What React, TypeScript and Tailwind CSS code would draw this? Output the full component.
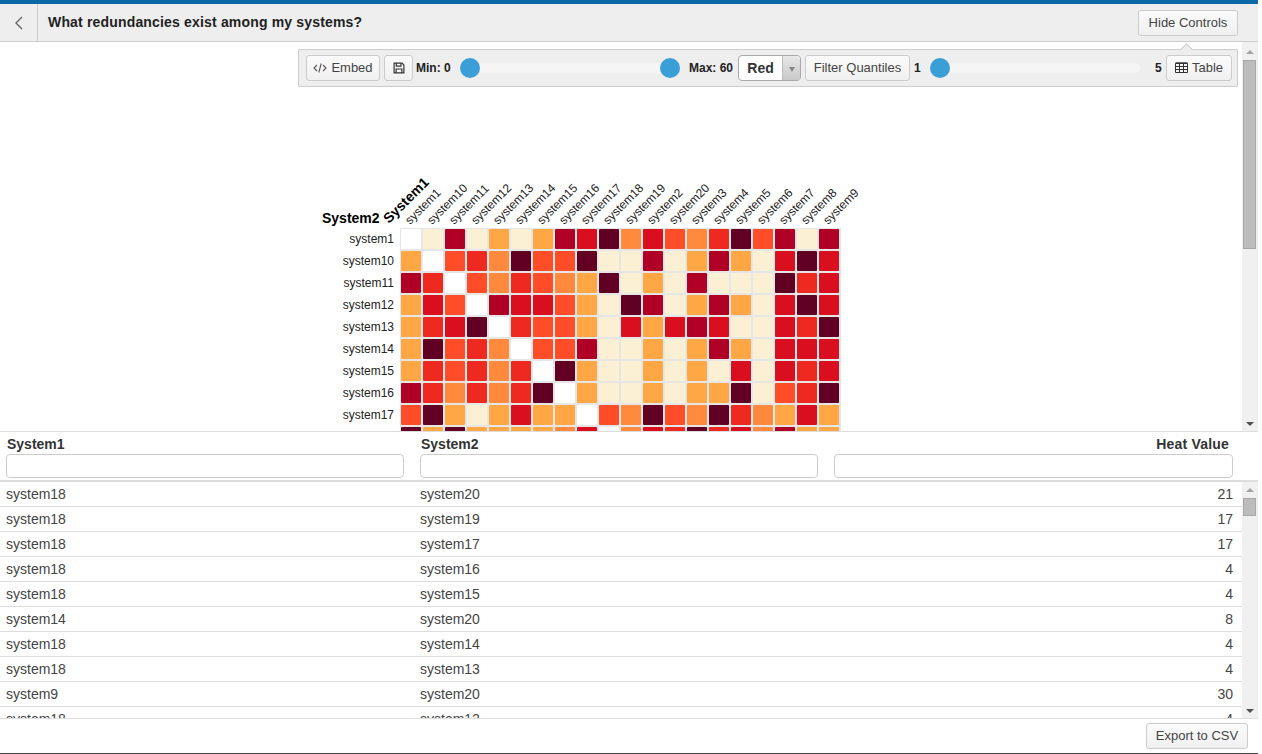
const COLORS: Record<string, string> = {
  w: "#ffffff",
  c: "#fbf0d3",
  o: "#ffa744",
  O: "#ff8a3d",
  r: "#ff4d2a",
  R: "#ee2a20",
  d: "#d90e1f",
  D: "#b10026",
  k: "#620023",
};

const COLUMNS = [1, 10, 11, 12, 13, 14, 15, 16, 17, 18, 19, 2, 20, 3, 4, 5, 6, 7, 8, 9].map((n) => `system${n}`);

const HEAT = [
  "wcDcocoDdkOdrORkrDcD",
  "owrROkrrkccDcoDocdkd",
  "DRwrORrOokcocDccckRd",
  "odrwDddrockDcoDocdkd",
  "oRdkwRrrocdodDdccdRk",
  "okrROwrrDccocoDocddd",
  "oRrRORwkoccococdcdRd",
  "DRORORkwoccocookcrRk",
  "rkocodoowrOkrOkROodo",
  "kokooooOdwOdRkRdODoo",
];

const ROWS = [
  ["system18", "system20", "21"],
  ["system18", "system19", "17"],
  ["system18", "system17", "17"],
  ["system18", "system16", "4"],
  ["system18", "system15", "4"],
  ["system14", "system20", "8"],
  ["system18", "system14", "4"],
  ["system18", "system13", "4"],
  ["system9", "system20", "30"],
  ["system18", "system12", "4"],
];

const buttonClass =
  "flex h-[26px] items-center justify-center rounded-[3px] border border-[#ccc] bg-gradient-to-b from-[#fbfbfb] to-[#f0f0f0] text-[13px] text-[#444]";

function Scrollbar({ topClass, thumbClass }: { topClass: string; thumbClass: string }) {
  return (
    <div className="flex h-full w-[16px] shrink-0 flex-col items-center bg-[#f0f0f0]">
      <div className={`h-0 w-0 border-x-[4px] border-b-[4px] border-x-transparent border-b-[#a3a3a3] ${topClass}`} />
      <div className={`ml-px mt-[6px] w-[13px] self-start border border-[#a8a8a8] bg-[#bcbcbc] ${thumbClass}`} />
      <div className="mb-[5px] mt-auto h-0 w-0 border-x-[4px] border-t-[4px] border-x-transparent border-t-[#505050]" />
    </div>
  );
}

function Slider({ width, second }: { width: string; second?: boolean }) {
  return (
    <div className={`relative flex h-[20px] items-center justify-between ${width}`}>
      <div className="absolute inset-x-0 h-[10px] rounded-[5px] bg-[#f5f5f5]" />
      <div className="relative h-[20px] w-[20px] rounded-full bg-[#3a9fd6]" />
      {second && <div className="relative h-[20px] w-[20px] rounded-full bg-[#3a9fd6]" />}
    </div>
  );
}

function CodeIcon() {
  return (
    <svg width="14" height="12" viewBox="0 0 14 12" fill="none" stroke="#555" strokeWidth="1.1">
      <path d="M4 3 1 6l3 3M10 3l3 3-3 3M8.2 1.5 5.8 10.5" />
    </svg>
  );
}

function SaveIcon() {
  return (
    <svg width="12" height="12" viewBox="0 0 13 13" fill="none" stroke="#333" strokeWidth="1.3">
      <path d="M1.2 1.2h8.6l2 2v8.6H1.2z" />
      <path d="M3.6 1.4v3h5v-3M3.4 11.6V7.6h6.2v4" />
    </svg>
  );
}

function TableIcon() {
  return (
    <svg width="13" height="12" viewBox="0 0 13 12" fill="none" stroke="#333" strokeWidth="1">
      <path d="M.5 1.5h12v9H.5zM.5 4.5h12M.5 7.5h12M4.5 1.5v9M8.5 1.5v9" />
      <path d="M.5 1h12" strokeWidth="1.4" />
    </svg>
  );
}

function Heatmap() {
  return (
    <svg viewBox="310 170 560 261" className="block h-[261px] w-[560px]" fontFamily="'Liberation Sans', Arial, sans-serif">
      <rect x={400} y={228} width={441} height={220} fill="#e6e6e6" />
      {HEAT.map((row, r) =>
        row.split("").map((cell, c) => (
          <rect
            key={`${r}-${c}`}
            x={401 + c * 22}
            y={229 + r * 22}
            width={20}
            height={20}
            rx={1}
            fill={COLORS[cell]}
          />
        ))
      )}
      {COLUMNS.map((name, i) => (
        <text key={name} transform={`translate(${410 + i * 22} 225) rotate(-45)`} fontSize={12} fill="#222">
          {name}
        </text>
      ))}
      {["system1", "system10", "system11", "system12", "system13", "system14", "system15", "system16", "system17", "system18"].map(
        (name, i) => (
          <text key={name} x={394} y={243 + i * 22} fontSize={12} textAnchor="end" fill="#222">
            {name}
          </text>
        )
      )}
      <text x={322} y={223} fontSize={14} fontWeight="bold" fill="#000">
        System2
      </text>
      <text transform="translate(389 224) rotate(-45)" fontSize={14} fontWeight="bold" fill="#000">
        System1
      </text>
    </svg>
  );
}

function Controls() {
  return (
    <div className="absolute left-[298px] top-[7px] flex h-[38px] w-[940px] items-center rounded-[2px] border border-[#ccc] bg-[#eee] pl-[7px] text-[12px] text-[#222]">
      <div className="absolute -top-[5px] left-[883px] h-[9px] w-[9px] rotate-45 border-l border-t border-[#ccc] bg-[#eee]" />
      <button className={`${buttonClass} w-[74px] gap-1`}>
        <CodeIcon />
        Embed
      </button>
      <button className={`${buttonClass} ml-[4px] w-[29px]`}>
        <SaveIcon />
      </button>
      <span className="ml-[3px] w-[44px] whitespace-nowrap font-bold">Min: 0</span>
      <Slider width="w-[220px]" second />
      <span className="ml-[9px] w-[49px] whitespace-nowrap font-bold">Max: 60</span>
      <div className="flex h-[26px] w-[63px] overflow-hidden rounded-[4px] border border-[#aaa] bg-white">
        <span className="flex-1 text-center text-[14px] font-bold leading-[25px] text-[#333]">Red</span>
        <span className="flex w-[18px] items-center justify-center border-l border-[#bbb] bg-gradient-to-b from-[#e8e8e8] to-[#c8c8c8]">
          <span className="mt-[2px] h-0 w-0 border-x-[3px] border-t-[5px] border-x-transparent border-t-[#888]" />
        </span>
      </div>
      <button className={`${buttonClass} ml-[4px] w-[105px]`}>Filter Quantiles</button>
      <span className="ml-[4px] w-[16px] font-bold">1</span>
      <Slider width="w-[210px]" />
      <span className="ml-[15px] w-[11px] font-bold">5</span>
      <button className={`${buttonClass} w-[66px] gap-1`}>
        <TableIcon />
        Table
      </button>
    </div>
  );
}

export default function App() {
  return (
    <div className="flex h-[754px] w-[1258px] flex-col overflow-hidden border-b border-[#444] border-t-[4px] border-t-[#0b68a8] bg-white font-['Liberation_Sans',Arial,sans-serif] text-[#333]">
      <header className="flex h-[38px] shrink-0 items-center border-b border-[#ccc] bg-[#eeeeee]">
        <div className="flex h-full w-[38px] items-center justify-center border-r border-[#ccc]">
          <svg width="10" height="16" viewBox="0 0 10 16" fill="none" stroke="#666" strokeWidth="1.4">
            <path d="M8 2 2 8l6 6" />
          </svg>
        </div>
        <h1 className="ml-[10px] text-[14px] font-bold tracking-[0.17px] text-[#222]">What redundancies exist among my systems?</h1>
        <button className={`${buttonClass} ml-auto mr-[20px] w-[100px]`}>Hide Controls</button>
      </header>

      <main className="relative flex h-[390px] shrink-0 border-b border-[#ddd]">
        <div className="flex-1 overflow-hidden pl-[310px] pt-[128px]">
          <Heatmap />
        </div>
        <Scrollbar topClass="mt-[8px]" thumbClass="h-[189px]" />
        <Controls />
      </main>

      <section className="h-[50px] shrink-0 border-b-[2px] border-[#ddd]">
        <div className="grid w-[1242px] grid-cols-3 text-[14px] font-bold">
          <div className="pl-[6px] pr-[10px]">
            <p className="ml-px mt-[3px] h-[18px] leading-[18px]">System1</p>
            <input className="mt-[1px] block h-[24px] w-full rounded-[4px] border border-[#ccc]" />
          </div>
          <div className="pl-[6px] pr-[10px]">
            <p className="ml-px mt-[3px] h-[18px] leading-[18px]">System2</p>
            <input className="mt-[1px] block h-[24px] w-full rounded-[4px] border border-[#ccc]" />
          </div>
          <div className="pl-[6px] pr-[9px]">
            <p className="mr-[4px] mt-[3px] h-[18px] text-right leading-[18px] tracking-[0.2px]">Heat Value</p>
            <input className="mt-[1px] block h-[24px] w-full rounded-[4px] border border-[#ccc]" />
          </div>
        </div>
      </section>

      <section className="flex min-h-0 flex-1">
        <div className="flex-1 overflow-hidden">
          {ROWS.map((row, i) => (
            <div key={i} className="grid h-[25px] grid-cols-3 border-b border-[#ddd] text-[14px] leading-[24px] text-[#444]">
              <span className="pl-[6px]">{row[0]}</span>
              <span className="pl-[6px]">{row[1]}</span>
              <span className="pr-[9px] text-right">{row[2]}</span>
            </div>
          ))}
        </div>
        <Scrollbar topClass="mt-[6px]" thumbClass="h-[18px]" />
      </section>

      <footer className="flex h-[35px] shrink-0 items-start justify-end border-t border-[#ddd] pr-[10px] pt-[4px]">
        <button className={`${buttonClass} h-[24px] w-[102px]`}>Export to CSV</button>
      </footer>
    </div>
  );
}
